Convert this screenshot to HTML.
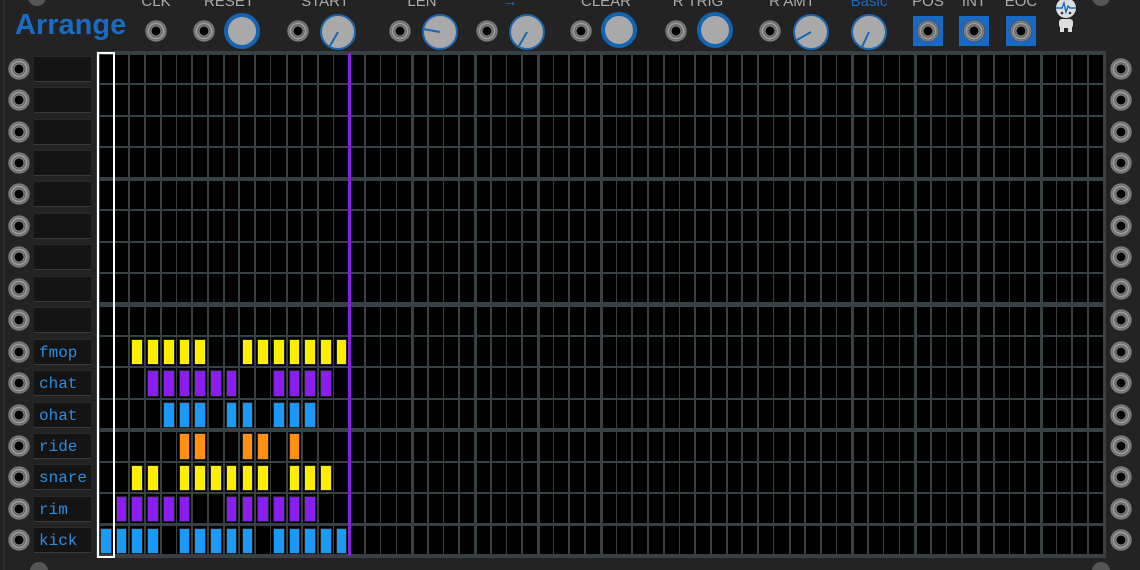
<!DOCTYPE html>
<html><head><meta charset="utf-8"><style>
html,body{margin:0;width:1140px;height:570px;overflow:hidden}
body{background:#232323;font-family:"Liberation Sans",sans-serif;position:relative}
.a{position:absolute}
.jack{position:absolute;width:22px;height:22px;border-radius:50%;background:radial-gradient(circle,#000 0 4px,#999 5px,#555 6px,#aaa 7.5px,#666 9px,#8a8a8a 10px,#333 11px)}
.knob{position:absolute;border-radius:50%;background:#a9a9a9;box-sizing:border-box;border:2px solid #1a66b0}
.big{border:4px solid #1464b4}
.lbl{position:absolute;top:-7px;color:#aaa;font-size:15px;transform:translateX(-50%);white-space:nowrap}
.box{position:absolute;left:34px;width:57px;height:26px;background:#141414;border-top:1px solid #2a2a2a;border-bottom:1px solid #3a3a3a;box-sizing:border-box;font-family:"Liberation Mono",monospace;color:#2a8de0;font-size:16px;line-height:26px;padding-left:5px}
.cell{position:absolute;background:#000}
.n{position:absolute;border:1px solid #222;box-sizing:border-box}
.out{position:absolute;width:30px;height:30px;background:#1769c4}
</style></head><body>
<div class="a" style="left:3px;top:0;width:2px;height:570px;background:#2c2c2c"></div>
<div class="a" style="left:15px;top:9px;color:#1a6cc0;font-weight:bold;font-size:29px">Arrange</div>
<div class="a" style="left:28px;top:-12px;width:18px;height:18px;border-radius:50%;background:#555"></div>
<div class="a" style="left:1092px;top:-12px;width:18px;height:18px;border-radius:50%;background:#555"></div>
<div class="a" style="left:30px;top:562px;width:18px;height:18px;border-radius:50%;background:#555"></div>
<div class="a" style="left:1092px;top:562px;width:18px;height:18px;border-radius:50%;background:#555"></div>
<div id="top"></div>
<div class="a" style="left:96px;top:51px;width:1010px;height:507px;background:#374042"></div>
<div id="g"></div>
<div class="a" style="left:97px;top:52px;width:14px;height:502px;border:2px solid #fff"></div>
<div class="a" style="left:348px;top:53px;width:3px;height:503px;background:#8a1ee0"></div>
<svg class="a" style="left:1050px;top:0" width="36" height="34" viewBox="0 0 36 34">
<circle cx="16" cy="8" r="10" fill="#ddd"/><path d="M6 8h6l2-5 2 9 2-6 2 2h6" stroke="#1a6cc0" stroke-width="1.5" fill="none"/>
<circle cx="12" cy="13" r="1.3" fill="#333"/><circle cx="20" cy="13" r="1.3" fill="#333"/>
<rect x="9" y="19" width="14" height="9" rx="3" fill="#ddd"/><rect x="10" y="27" width="4" height="5" fill="#ddd"/><rect x="18" y="27" width="4" height="5" fill="#ddd"/></svg>
<script>
var t='';
function J(x,y){return '<div class="jack" style="left:'+(x-11)+'px;top:'+(y-11)+'px"></div>';}
function K(x,y,r,big,ang){var s='<div class="knob'+(big?' big':'')+'" style="left:'+(x-r)+'px;top:'+(y-r)+'px;width:'+2*r+'px;height:'+2*r+'px"></div>';
if(ang!=null){var a=ang*Math.PI/180;s+='<svg class="a" style="left:'+(x-r)+'px;top:'+(y-r)+'px" width="'+2*r+'" height="'+2*r+'"><line x1="'+r+'" y1="'+r+'" x2="'+(r+Math.cos(a)*(r-2))+'" y2="'+(r+Math.sin(a)*(r-2))+'" stroke="#1a66b0" stroke-width="2"/></svg>';}return s;}
function L(x,s,c){return '<div class="lbl" style="left:'+x+'px;'+(c?'color:'+c:'')+'">'+s+'</div>';}
t+=L(156,'CLK')+J(156,31)+L(229,'RESET')+J(204,31)+K(242,31,18,1);
t+=L(325,'START')+J(298,31)+K(338,32,18,0,120);
t+=L(422,'LEN')+J(400,31)+K(440,32,18,0,190);
t+=L(510,'→','#1a6cc0')+J(487,31)+K(527,32,18,0,120);
t+=L(606,'CLEAR')+J(581,31)+K(619,30,18,1);
t+=L(698,'R TRIG')+J(676,31)+K(715,30,18,1);
t+=L(792,'R AMT')+J(770,31)+K(811,32,18,0,150);
t+=L(869,'Basic','#1a6cc0')+K(869,32,18,0,115);
[[928,'POS'],[974,'INT'],[1021,'EOC']].forEach(function(p){t+=L(p[0],p[1])+'<div class="out" style="left:'+(p[0]-15)+'px;top:16px"></div>'+J(p[0],31);});
var names=['','','','','','','','','','fmop','chat','ohat','ride','snare','rim','kick'];
var cw=1006/64,rh=503/16;
for(var r=0;r<16;r++){var cy=53+r*rh+rh/2;t+=J(19,cy)+J(1121,cy);t+='<div class="box" style="top:'+(cy-13)+'px">'+names[r]+'</div>';}
var g='';
for(var r=0;r<16;r++)for(var c=0;c<64;c++){
var x=98+c*cw,y=53+r*rh;var l=(c%4==0?1.5:0.5),tp=(r%4==0?2:1),bt=(r%4==3?2:1);
g+='<div class="cell" style="left:'+(x+l).toFixed(1)+'px;top:'+(y+tp).toFixed(1)+'px;width:'+(cw-l-1).toFixed(1)+'px;height:'+(rh-tp-bt).toFixed(1)+'px"></div>';}
var pat={9:[[2,6],[9,15],'#ffee00'],10:[[3,8],[11,14],'#8a1ef0'],11:[[4,6],[8,9],[11,13],'#1a99f5'],12:[[5,6],[9,10],[12,12],'#ff9010'],13:[[2,3],[5,10],[12,14],'#ffee00'],14:[[1,5],[8,13],'#8a1ef0'],15:[[0,3],[5,9],[11,15],'#1a99f5']};
for(var r in pat){var p=pat[r],col=p[p.length-1];for(var i=0;i<p.length-1;i++)for(var c=p[i][0];c<=p[i][1];c++){
var x=98+c*cw,y=53+r*rh;g+='<div class="n" style="background:'+col+';left:'+(x+2).toFixed(1)+'px;top:'+(y+3).toFixed(1)+'px;width:'+(cw-4).toFixed(1)+'px;height:'+(rh-5).toFixed(1)+'px"></div>';}}
document.getElementById('top').innerHTML=t;document.getElementById('g').innerHTML=g;
</script>
</body></html>
